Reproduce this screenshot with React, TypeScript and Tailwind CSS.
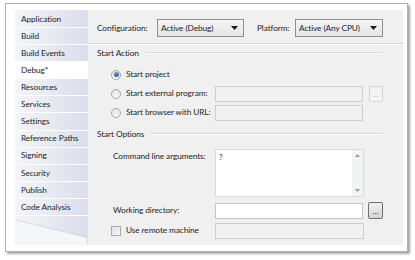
import React from 'react';

const tabs = [
    'Application',
    'Build',
    'Build Events',
    'Debug*',
    'Resources',
    'Services',
    'Settings',
    'Reference Paths',
    'Signing',
    'Security',
    'Publish',
    'Code Analysis',
];

const Radio = ({ checked }: { checked?: boolean }) => (
    <span className="flex h-[10px] w-[10px] shrink-0 items-center justify-center rounded-full border border-[#a6a6a6] bg-gradient-to-b from-[#e4e4e4] to-[#f8f8f8]">
        {checked && <span className="h-[5px] w-[5px] rounded-full bg-gradient-to-b from-[#6d8fc8] to-[#2d5aa8]" />}
    </span>
);

const Select = ({ value, width }: { value: string; width: string }) => (
    <div
        className={`flex h-[18px] ${width} items-center justify-between border border-[#8e8f8f] bg-gradient-to-b from-[#f6f6f6] to-[#e4e4e4] pl-[3px] pr-[5px]`}
    >
        <span>{value}</span>
        <svg width="7" height="4" viewBox="0 0 7 4">
            <path d="M0 0h7L3.5 4z" fill="#1a1a1a" />
        </svg>
    </div>
);

const SectionHeader = ({ title }: { title: string }) => (
    <div className="flex h-[12px] items-center pl-[9px] pr-[20px]">
        <span>{title}</span>
        <div className="ml-[7px] flex-1 border-t border-b border-t-[#d5d5d5] border-b-white" />
    </div>
);

const DotsButton = ({ enabled }: { enabled?: boolean }) =>
    enabled ? (
        <div className="ml-[5px] flex h-[17px] w-[15px] items-center justify-center rounded-[2px] border border-[#707070] bg-gradient-to-b from-[#f2f2f2] to-[#d4d4d4] text-[8px] leading-none text-[#333]">
            ...
        </div>
    ) : (
        <div className="ml-[6px] flex h-[16px] w-[14px] items-center justify-center rounded-[2px] border border-[#d3d3d3] bg-[#f4f4f4] text-[8px] leading-none text-[#b8b8b8]">
            ...
        </div>
    );

export default function App() {
    return (
        <div
            className="h-[260px] w-[415px] whitespace-nowrap bg-white pl-[5px] pt-[3px] text-[8.3px] tracking-[-0.1px] text-[#1e1e1e]"
            style={{ fontFamily: 'Lato, sans-serif' }}
        >
            <div className="flex h-[249px] w-[403px] border border-[#b0b0b0] bg-white pb-[6px] pl-[9px] pr-[4px] pt-[6px] shadow-[2px_2px_2px_rgba(0,0,0,0.35)]">
                {/* side tabs */}
                <div className="relative flex w-[73px] flex-col bg-gradient-to-r from-[#f4f5f9] to-[#dadeea] pt-[1px]">
                    {tabs.map((tab) => (
                        <div
                            key={tab}
                            className={`flex h-[17.6px] items-center border-b border-white pl-[6px] ${tab === 'Debug*' ? 'bg-white' : ''}`}
                        >
                            {tab}
                        </div>
                    ))}
                    <svg className="mt-auto" width="73" height="30" viewBox="0 0 73 30">
                        <polygon points="0,4 73,22 73,30 0,30" fill="#f5f6fa" />
                        <line x1="0" y1="4" x2="73" y2="22" stroke="#c9cedb" strokeWidth="0.8" />
                    </svg>
                </div>

                {/* settings panel */}
                <div className="flex flex-1 flex-col bg-[#f0f0f0]">
                    <div className="mt-[9px] flex h-[18px] items-center pl-[9px]">
                        <span className="w-[60px]">Configuration:</span>
                        <Select value="Active (Debug)" width="w-[87px]" />
                        <span className="ml-[13px] w-[38px]">Platform:</span>
                        <Select value="Active (Any CPU)" width="w-[88px]" />
                    </div>
                    <div className="mt-[6px] border-t border-b border-t-[#d5d5d5] border-b-white" />

                    <div className="mt-[2px]">
                        <SectionHeader title="Start Action" />
                    </div>

                    <div className="mt-[6px] flex flex-col pl-[23px]">
                        <div className="flex h-[19px] items-center">
                            <Radio checked />
                            <span className="ml-[5px]">Start project</span>
                        </div>
                        <div className="flex h-[19px] items-center">
                            <div className="flex w-[104px] items-center">
                                <Radio />
                                <span className="ml-[5px]">Start external program:</span>
                            </div>
                            <div className="h-[16px] w-[148px] border border-[#cdcdcd] bg-[#f0f0f0]" />
                            <DotsButton />
                        </div>
                        <div className="flex h-[19px] items-center">
                            <div className="flex w-[104px] items-center">
                                <Radio />
                                <span className="ml-[5px]">Start browser with URL:</span>
                            </div>
                            <div className="h-[16px] w-[148px] border border-[#cdcdcd] bg-[#f0f0f0]" />
                        </div>
                    </div>

                    <div className="mt-[6px]">
                        <SectionHeader title="Start Options" />
                    </div>

                    <div className="mt-[9px] flex pl-[23px]">
                        <span className="w-[104px] pl-[2px] pt-[1px]">Command line arguments:</span>
                        <div className="flex h-[48px] w-[149px] border border-[#d9d9d9] bg-white">
                            <span className="flex-1 pl-[3px] pt-[1px]">?</span>
                            <div className="flex w-[11px] flex-col items-center justify-between bg-[#f2f4f4] py-[4px]">
                                <svg width="5" height="3" viewBox="0 0 5 3">
                                    <path d="M0 3L2.5 0 5 3z" fill="#9a9a9a" />
                                </svg>
                                <svg width="5" height="3" viewBox="0 0 5 3">
                                    <path d="M0 0h5L2.5 3z" fill="#9a9a9a" />
                                </svg>
                            </div>
                        </div>
                    </div>

                    <div className="mt-[5px] flex h-[17px] items-center pl-[23px]">
                        <span className="w-[104px] pl-[2px]">Working directory:</span>
                        <div className="h-[16px] w-[148px] border border-[#c6c6c6] bg-white" />
                        <DotsButton enabled />
                    </div>

                    <div className="mt-[3px] flex h-[17px] items-center pl-[23px]">
                        <div className="flex w-[104px] items-center">
                            <span className="h-[10px] w-[10px] border border-[#a9a9a9] bg-gradient-to-br from-[#e2e2e2] to-[#f7f7f7]" />
                            <span className="ml-[5px]">Use remote machine</span>
                        </div>
                        <div className="h-[16px] w-[149px] border border-[#cdcdcd] bg-[#f0f0f0]" />
                    </div>
                </div>
            </div>
        </div>
    );
}
